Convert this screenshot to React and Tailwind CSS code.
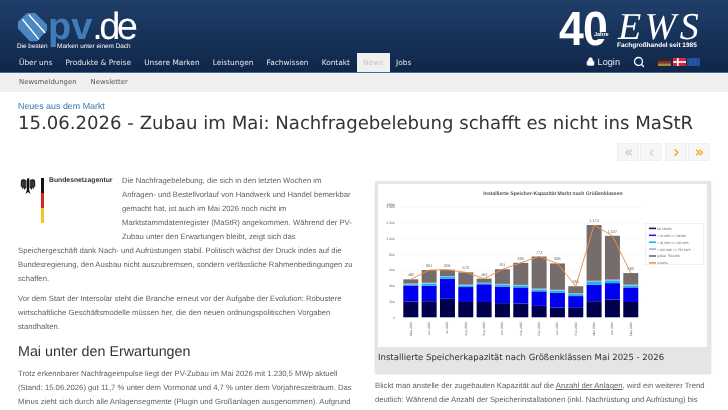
import React from "react";
import { Lock, Search, ChevronLeft, ChevronRight, ChevronsLeft, ChevronsRight } from "lucide-react";

const navItems = ["Über uns", "Produkte & Preise", "Unsere Marken", "Leistungen", "Fachwissen", "Kontakt"];
const dejavu = { fontFamily: '"DejaVu Sans", sans-serif' };

function PvLogo() {
  return (
    <div className="relative w-[140px] h-[53px] shrink-0">
      <div className="absolute left-[17px] top-[43px] text-[6.4px] leading-[8px] text-white whitespace-nowrap font-['Liberation_Sans']">
        Die besten<span className="inline-block w-[9.5px]"></span>Marken unter einem Dach
      </div>
      <svg viewBox="0 0 34 34" className="absolute left-[17px] top-[12px] w-[31px] h-[31px]">
        <path d="M11 1 L20 1 L33 14 L33 20 L22 32 L14 32 L1 18 L1 11 Z" fill="#4b87c2" />
        <path d="M6 8 L24 30" stroke="#fff" strokeWidth="1.5" />
        <path d="M13 3 L31 23" stroke="#fff" strokeWidth="1.5" />
      </svg>
      <div className="absolute left-[48px] top-[7px] text-[38px] leading-[40px] whitespace-nowrap" style={{ fontFamily: '"Liberation Sans", sans-serif' }}>
        <span className="font-bold text-[#3f7cb8]">pv</span>
        <span className="text-white tracking-[-3.6px]">.de</span>
      </div>
    </div>
  );
}

function EwsLogo() {
  return (
    <div className="relative w-[152px] h-[53px] shrink-0">
      <div className="absolute left-[0px] top-[7px] text-[48px] leading-[46px] font-bold text-white tracking-[-1px] font-['Liberation_Sans'] scale-x-[0.93] origin-left">40</div>
      <div className="absolute left-[34px] top-[32px] text-[5.5px] leading-[7px] font-bold text-white font-['Liberation_Sans'] bg-[#1b3558] px-[1px]">Jahre</div>
      <div className="absolute left-[59px] top-[7px] text-[38px] leading-[40px] italic text-white font-['Liberation_Serif'] tracking-[3.4px] whitespace-nowrap">EWS</div>
      <div className="absolute left-[58px] top-[42px] text-[6.5px] leading-[8px] font-bold text-white font-['Liberation_Sans'] whitespace-nowrap">Fachgroßhandel seit 1985</div>
    </div>
  );
}

function Flags() {
  return (
    <div className="flex gap-[1.5px] items-center">
      <svg viewBox="0 0 13 8" className="w-[13px] h-[8px]">
        <rect width="13" height="3" fill="#2a2a2a" />
        <rect y="3" width="13" height="2.5" fill="#8c2f2a" />
        <rect y="5.5" width="13" height="2.5" fill="#a78a30" />
      </svg>
      <svg viewBox="0 0 13 8" className="w-[13px] h-[8px]">
        <rect width="13" height="8" fill="#d8263a" />
        <rect x="4" width="1.6" height="8" fill="#fff" />
        <rect y="3.2" width="13" height="1.6" fill="#fff" />
      </svg>
      <svg viewBox="0 0 13 8" className="w-[13px] h-[8px]">
        <rect width="13" height="8" fill="#1f4f9e" />
        <circle cx="6.5" cy="4" r="2.4" fill="none" stroke="#6d86a8" strokeWidth="0.6" strokeDasharray="0.6 0.6" />
      </svg>
    </div>
  );
}

function Header() {
  return (
    <header className="h-[73px] bg-gradient-to-b from-[#1f3f69] to-[#10264a] flex flex-col border-b border-[#4a6a8c]">
      <div className="h-[53px] flex justify-between shrink-0">
        <PvLogo />
        <div className="mr-[17px]"><EwsLogo /></div>
      </div>
      <div className="flex-1 flex items-stretch pl-[12.4px] pr-[28px] text-[7.4px]" style={dejavu}>
        {navItems.map((n) => (
          <span key={n} className="px-[6.6px] flex items-center text-[#e3e8ee] whitespace-nowrap">{n}</span>
        ))}
        <span className="px-[6.5px] flex items-center bg-[#f0f0f0] text-[#c5c5c5]">News</span>
        <span className="px-[6.5px] flex items-center text-[#e3e8ee]">Jobs</span>
        <div className="ml-auto flex items-center pb-[2px]">
          <Lock size={9} fill="#fff" color="#fff" className="mr-[3px]" />
          <span className="text-[9.2px] text-[#e3e8ee] font-['Liberation_Sans'] mt-[2px]">Login</span>
          <Search size={12} strokeWidth={2.6} color="#fff" className="ml-[13px] mr-[13px]" />
          <Flags />
        </div>
      </div>
    </header>
  );
}

function SubNav() {
  return (
    <div className="h-[19px] bg-[#f0f0f0] flex items-center pl-[19px] gap-[14px] text-[6.9px] text-[#555]" style={dejavu}>
      <span>Newsmeldungen</span>
      <span>Newsletter</span>
    </div>
  );
}

function PagerBtn({ children }) {
  return <span className="w-[22px] h-[18px] flex items-center justify-center bg-[#f6f6f6] border border-[#efefef]">{children}</span>;
}

function Pager() {
  return (
    <div className="flex justify-end gap-[1px] pr-[18px] mt-[8px]">
      <PagerBtn><ChevronsLeft size={11} strokeWidth={3.5} color="#d0d0d0" /></PagerBtn>
      <PagerBtn><ChevronLeft size={11} strokeWidth={3.5} color="#d8d8d8" /></PagerBtn>
      <span className="w-[1px]"></span>
      <PagerBtn><ChevronRight size={11} strokeWidth={3.5} color="#f8a81c" /></PagerBtn>
      <PagerBtn><ChevronsRight size={11} strokeWidth={3.5} color="#f8a81c" /></PagerBtn>
    </div>
  );
}

function BnetzaLogo() {
  return (
    <div className="float-left w-[104px] h-[70px] flex items-start">
      <svg viewBox="0 0 20 22" className="ml-[2px] w-[16px] h-[18px] mt-[3px] shrink-0">
        <path d="M8.5 3 L10 1 L12 2 L11.5 3.5 L11.5 16 L13 21 L10 18.5 L7 21 L8.5 16 Z" fill="#111" />
        <path d="M8 4 C5 2 2 2 1 5 L1 13 L2.5 11 L2.5 15 L4.5 12.5 L5 16 L8 13 Z" fill="#1c1c1c" />
        <path d="M12 4 C15 2 18 2 19 5 L19 13 L17.5 11 L17.5 15 L15.5 12.5 L15 16 L12 13 Z" fill="#1c1c1c" />
        <path d="M3 5 L3 11 M5 4.5 L5 12 M7 5 L7 12 M13 5 L13 12 M15 4.5 L15 12 M17 5 L17 11" stroke="#8a8a8a" strokeWidth="0.5" />
      </svg>
      <div className="ml-[5px] w-[2.5px] h-[45px] mt-[4px] flex flex-col shrink-0">
        <span className="flex-1 bg-[#111]"></span>
        <span className="flex-1 bg-[#d22]"></span>
        <span className="flex-1 bg-[#f2c61f]"></span>
      </div>
      <span className="ml-[5.5px] mt-[1px] text-[6.8px] leading-[12px] font-bold text-[#333] whitespace-nowrap font-['Liberation_Sans']">Bundesnetzagentur</span>
    </div>
  );
}

const months = ["May 2025","Jun 2025","Jul 2025","Aug 2025","Sep 2025","Oct 2025","Nov 2025","Dec 2025","Jan 2026","Feb 2026","Mar 2026","Apr 2026","May 2026"];
const data = [
  [200,405,420,430,483,"483"],[205,400,430,440,601,"601"],[235,490,515,525,605,"605"],[195,385,405,415,572,"572"],
  [195,420,435,440,492,"492"],[180,390,415,425,611,"611"],[175,380,405,412,693,"693"],[145,330,355,365,773,"773"],
  [125,310,340,350,685,"685"],[120,270,295,305,395,"395"],[205,415,450,465,1174,"1.174"],[225,435,470,480,1037,"1.037"],
  [195,380,405,415,563,"563"],
];
const colors = ["#00004d","#0000ee","#19b5ee","#8fb4e0","#766c6c"];
const legend = [["#1a1a66","bis 10kWh"],["#2222ee","> 10 kWh <= 30kWh"],["#19b5ee","> 30 kWh <= 100 kWh"],["#8fb4e0","> 100 kWh <= 750 kWh"],["#766c6c","größer 750 kWh"],["#f0924c","Summe"]];

function Chart() {
  const Y = (v) => 133.3 - v * 0.0786;
  const X = (i) => 25.3 + i * 18.33;
  const fs = { fontFamily: '"Liberation Sans", sans-serif' };
  return (
    <svg viewBox="0 0 329 163" className="w-[329px] h-[163px] block bg-white" style={fs}>
      <text x="175" y="11" textAnchor="middle" fontSize="5.1" fontWeight="bold" fill="#555">Installierte Speicher-Kapazität Markt nach Größenklassen</text>
      <text x="9" y="22" fontSize="3.5" fill="#666">MWh</text>
      {[0,200,400,600,800,1000,1200,1400].map((v) => (
        <g key={v}>
          {v > 0 && <line x1="22" x2="263" y1={Y(v)} y2={Y(v)} stroke="#e2e2e2" strokeWidth="0.5" strokeDasharray="1 1" />}
          <text x="17" y={Y(v) + 1.2} textAnchor="end" fontSize="3.5" fill="#666">{v === 0 ? "0" : v >= 1000 ? `1.${String(v).slice(1)}` : v}</text>
        </g>
      ))}
      {data.map((d, i) => {
        const lows = [0, ...d.slice(0, 4)];
        return (
          <g key={i}>
            {lows.map((lo, k) => (
              <rect key={k} x={X(i)} width="15" y={Y(d[k])} height={Y(lo) - Y(d[k])} fill={colors[k]} />
            ))}
            <text x={X(i) + 7.5} y={Y(d[4]) - 3} textAnchor="middle" fontSize="3.8" fill="#666">{d[5]}</text>
            <text transform={`translate(${X(i) + 8.5} ${138}) rotate(-90)`} textAnchor="end" fontSize="3.2" fill="#666">{months[i]}</text>
          </g>
        );
      })}
      <polyline fill="none" stroke="#f0924c" strokeWidth="1" points={data.map((d, i) => `${X(i) + 7.5},${Y(d[4])}`).join(" ")} />
      <rect x="267.5" y="39.5" width="58" height="41" fill="#fff" stroke="#e8e8e8" strokeWidth="0.7" />
      {legend.map(([c, t], i) => (
        <g key={t}>
          <rect x="271" y={43.6 + i * 6.9} width="7" height="1.6" fill={c} />
          <text x="279" y={45.8 + i * 6.9} fontSize="3.2" fill="#666">{t}</text>
        </g>
      ))}
    </svg>
  );
}

export default function App() {
  return (
    <div className="w-[728px] h-[410px] overflow-hidden bg-white font-['Liberation_Sans'] blur-[0.35px] [text-rendering:geometricPrecision]">
      <Header />
      <SubNav />
      <div className="pt-[8px] pl-[18px]">
        <div className="text-[8.9px] leading-[12px] text-[#3a76a8]">Neues aus dem Markt</div>
        <h1 className="text-[18.1px] leading-[23px] text-[#333] whitespace-nowrap" style={dejavu}>15.06.2026 - Zubau im Mai: Nachfragebelebung schafft es nicht ins MaStR</h1>
      </div>
      <Pager />
      <div className="flex pl-[18px] gap-[21px] mt-[13px] text-[7.7px] leading-[14px] text-[#5f5f5f]">
        <div className="w-[336px] shrink-0">
          <BnetzaLogo />
          <p>Die Nachfragebelebung, die sich in den letzten Wochen im Anfragen- und Bestellvorlauf von Handwerk und Handel bemerkbar gemacht hat, ist auch im Mai 2026 noch nicht im Marktstammdatenregister (MaStR) angekommen. Während der PV-Zubau unter den Erwartungen bleibt, zeigt sich das Speichergeschäft dank Nach- und Aufrüstungen stabil. Politisch wächst der Druck indes auf die Bundesregierung, den Ausbau nicht auszubremsen, sondern verlässliche Rahmenbedingungen zu schaffen.</p>
          <p className="mt-[6px]">Vor dem Start der Intersolar steht die Branche erneut vor der Aufgabe der Evolution: Robustere wirtschaftliche Geschäftsmodelle müssen her, die den neuen ordnungspolitischen Vorgaben standhalten.</p>
          <h2 className="mt-[6px] text-[14.3px] leading-[24px] text-[#333]">Mai unter den Erwartungen</h2>
          <p className="mt-[3px]">Trotz erkennbarer Nachfrageimpulse liegt der PV-Zubau im Mai 2026 mit 1.230,5 MWp aktuell (Stand: 15.06.2026) gut 11,7 % unter dem Vormonat und 4,7 % unter dem Vorjahreszeitraum. Das Minus zieht sich durch alle Anlagensegmente (Plugin und Großanlagen ausgenommen). Aufgrund</p>
        </div>
        <div className="w-[336px] shrink-0">
          <figure className="mt-[7px] bg-[#e5e5e5] px-[3px] pt-[3px] h-[192px] rounded-[1px] shadow-[0_1px_2px_rgba(0,0,0,0.15)]">
            <Chart />
            <figcaption className="pt-[4px] text-[8.53px] leading-[14px] text-[#333]" style={dejavu}>Installierte Speicherkapazität nach Größenklässen Mai 2025 - 2026</figcaption>
          </figure>
          <p className="mt-[6px]">Blickt man anstelle der zugebauten Kapazität auf die <span className="underline">Anzahl der Anlagen</span>, wird ein weiterer Trend deutlich: Während die Anzahl der Speicherinstallationen (inkl. Nachrüstung und Aufrüstung) bis</p>
        </div>
      </div>
    </div>
  );
}
